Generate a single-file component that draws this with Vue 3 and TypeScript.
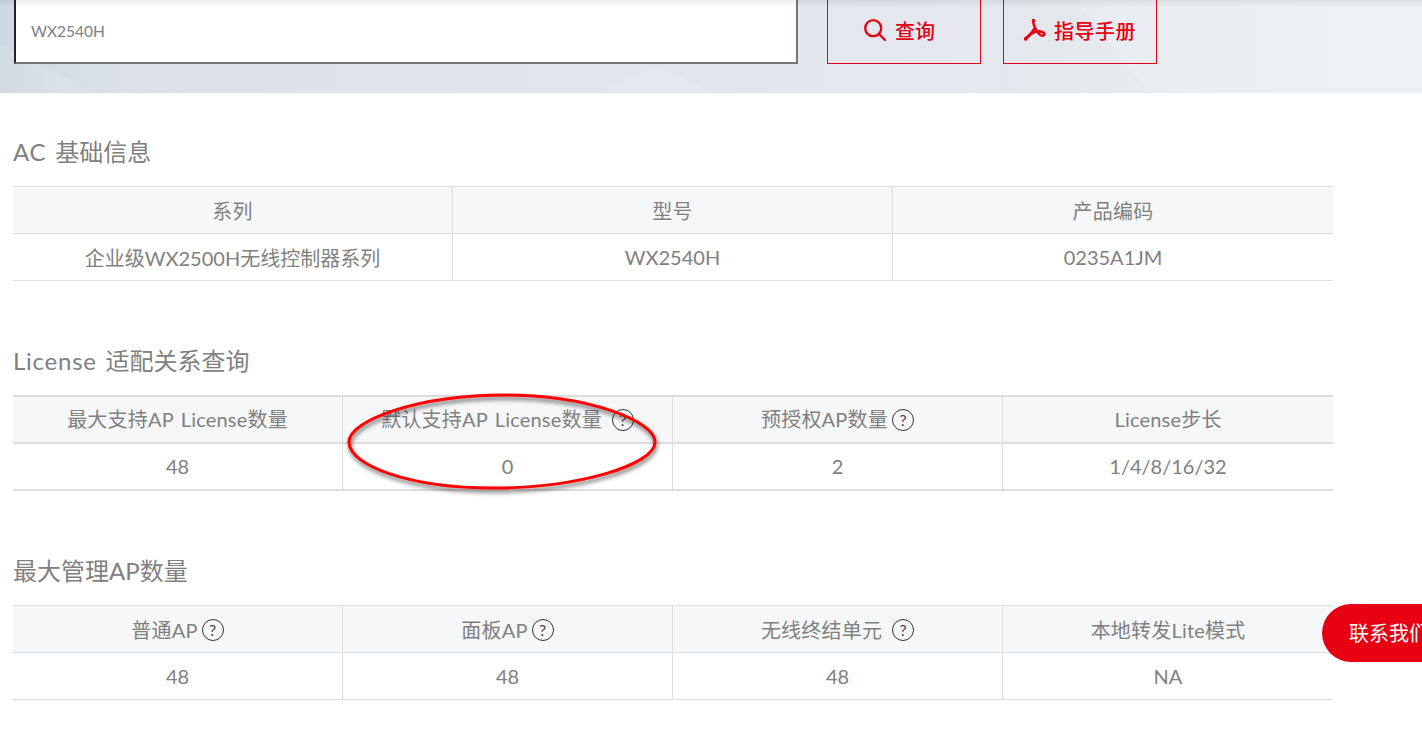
<script setup lang="ts">
interface Cell { text: string; help?: boolean; wide?: boolean }
interface Section { lat?: string; title: string; heavy?: boolean; head: Cell[]; row: string[] }

const sections: Section[] = [
  {
    lat: 'AC ',
    title: '基础信息',
    head: [{ text: '系列' }, { text: '型号' }, { text: '产品编码' }],
    row: ['企业级WX2500H无线控制器系列', 'WX2540H', '0235A1JM'],
  },
  {
    lat: 'License ',
    title: '适配关系查询',
    heavy: true,
    head: [
      { text: '最大支持AP License数量' },
      { text: '默认支持AP License数量', help: true, wide: true },
      { text: '预授权AP数量', help: true },
      { text: 'License步长' },
    ],
    row: ['48', '0', '2', '1/4/8/16/32'],
  },
  {
    title: '最大管理AP数量',
    head: [
      { text: '普通AP', help: true },
      { text: '面板AP', help: true },
      { text: '无线终结单元', help: true, wide: true },
      { text: '本地转发Lite模式' },
    ],
    row: ['48', '48', '48', 'NA'],
  },
]
</script>

<template>
  <div class="page">
    <header class="band">
      <svg class="facets" width="1422" height="93" viewBox="0 0 1422 93">
        <polygon points="0,45 95,93 0,93" fill="#fff" fill-opacity=".12" />
        <polygon points="600,93 655,66 715,93" fill="#fff" fill-opacity=".12" />
        <polygon points="1075,0 1150,93 1000,93 1000,0" fill="#000" fill-opacity=".012" />
      </svg>
      <div class="search">WX2540H</div>
      <a class="btn first">
        <svg class="ico" viewBox="0 0 22 22" width="22" height="22" fill="none" stroke="#e60012" stroke-width="2.300">
          <circle cx="9.200" cy="9.200" r="8" />
          <path d="M15 15.200 21 21" stroke-linecap="round" />
        </svg>
        <span>查询</span>
      </a>
      <a class="btn second">
        <svg class="ico" viewBox="0 0 24 24" width="24" height="24" fill="none" stroke="#e60012" stroke-width="2.500" stroke-linecap="round">
          <path d="M10.300 2.500C10 6 11 8 12 10C9.500 14 6 18 2.500 21" />
          <path d="M4 19.500C8 15.500 12 13 16 13.200C20 13.500 23 15.500 20.500 17.500C18 19 14 14 12 10" />
          <circle cx="10.400" cy="2.500" r="1.700" fill="#e60012" stroke="none" />
          <circle cx="2.800" cy="20.800" r="2" fill="#e60012" stroke="none" />
        </svg>
        <span>指导手册</span>
      </a>
    </header>

    <main class="content">
      <section v-for="s in sections" :key="s.title" class="sec">
        <h2><span v-if="s.lat" class="lat">{{ s.lat }}</span>{{ s.title }}</h2>
        <table :class="{ heavy: s.heavy }">
          <thead>
            <tr>
              <th v-for="c in s.head" :key="c.text">
                <span class="inner">
                  <span>{{ c.text }}</span>
                  <i v-if="c.help" class="help" :class="{ wide: c.wide }">?</i>
                </span>
              </th>
            </tr>
          </thead>
          <tbody>
            <tr>
              <td v-for="(v, i) in s.row" :key="i">{{ v }}</td>
            </tr>
          </tbody>
        </table>
      </section>
    </main>

    <svg class="ring" width="330" height="116" viewBox="0 0 330 116">
      <defs>
        <filter id="sh" x="-10%" y="-20%" width="120%" height="150%">
          <feDropShadow dx="1" dy="3" stdDeviation="2.200" flood-color="#000" flood-opacity=".6" />
        </filter>
      </defs>
      <path d="M11 57C11 36 78 10 167 10C250 10 317 36 317 57C317 80 240 103 155 103C70 103 11 80 11 57Z" fill="none" stroke="#f00" stroke-width="3" filter="url(#sh)" />
    </svg>

    <aside class="contact">联系我们</aside>
  </div>
</template>

<style scoped>
.page {
  position: relative;
  height: 729px;
  overflow: hidden;
  background: #fff;
  font-family: Lato, "Noto Sans CJK SC", sans-serif;
  color: #808080;
}
.band {
  position: relative;
  height: 93px;
  box-sizing: border-box;
  display: flex;
  align-items: flex-end;
  padding: 0 0 29px 14px;
  background: linear-gradient(90deg, #ced8e0 0, #d5dde5 4%, #dde2ea 10%, #e1e5ec 45%, #e4e8ee 65%, #e9edf1 78%, #ecf0f3 90%, #edf0f4 100%);
}
.band::after {
  content: "";
  position: absolute;
  left: 0;
  right: 0;
  top: 0;
  height: 7px;
  background: linear-gradient(to bottom, rgba(0, 0, 0, .07), rgba(0, 0, 0, 0));
  pointer-events: none;
}
.facets { position: absolute; left: 0; top: 0; }
.search {
  position: relative;
  width: 784px;
  height: 72px;
  box-sizing: border-box;
  margin-right: 29px;
  padding: 29px 0 0 15px;
  background: #fff;
  border-left: 2px solid #222;
  border-bottom: 2px solid #767676;
  border-right: 2px solid #767676;
  font-size: 15.500px;
  line-height: 20px;
  color: #808080;
}
.btn {
  position: relative;
  width: 154px;
  height: 72px;
  box-sizing: border-box;
  display: flex;
  align-items: center;
  justify-content: center;
  padding-top: 4px;
  border: 1px solid #e60012;
  color: #e60012;
  font-size: 20px;
  font-weight: 500;
  margin-right: 22px;
}
.first { gap: 9px; padding-right: 9px; }
.second { gap: 7px; padding-right: 1px; letter-spacing: .5px; }
.ico { flex: none; }
.content { padding: 40px 0 0 13px; width: 1320px; }
.sec { margin-bottom: 61px; }
h2 {
  margin: 0 0 15px;
  height: 38px;
  font-size: 24px;
  line-height: 38px;
  font-weight: 400;
  color: #808080;
}
.lat { letter-spacing: .75px; word-spacing: 2px; }
table {
  width: 1320px;
  border-collapse: separate;
  border-spacing: 0;
  table-layout: fixed;
  font-size: 20px;
}
th, td {
  padding: 0;
  text-align: center;
  font-weight: 400;
  box-sizing: border-box;
  border-bottom: 1px solid #ddd;
  border-right: 1px solid #ddd;
}
th:last-child, td:last-child { border-right: 0; }
th {
  height: 48px;
  background: #f6f7f9;
  border-top: 1px solid #ddd;
  letter-spacing: .2px;
  word-spacing: 2px;
}
td { height: 47px; }
.heavy th { height: 49px; padding-bottom: 2px; border-top-width: 2px; border-bottom-width: 2px; }
.heavy td { padding-bottom: 2px; border-bottom-width: 2px; }
.inner { display: inline-flex; align-items: center; justify-content: center; }
.help {
  flex: none;
  width: 22px;
  height: 22px;
  box-sizing: border-box;
  margin: 2px 0 0 4px;
  border: 1px solid #333;
  border-radius: 50%;
  font-style: normal;
  font-size: 16px;
  line-height: 20px;
  text-align: center;
  letter-spacing: 0;
  color: #444;
}
.help.wide { margin-left: 10px; }
.ring {
  position: absolute;
  left: 338px;
  top: 385px;
  pointer-events: none;
}
.contact {
  position: absolute;
  left: 1322px;
  top: 604px;
  width: 130px;
  height: 58px;
  box-sizing: border-box;
  padding-left: 27px;
  border-radius: 29px;
  background: #e60012;
  color: #fff;
  font-size: 20px;
  line-height: 58px;
  white-space: nowrap;
}
</style>

<style>
html, body { margin: 0; overflow: hidden; }
</style>
